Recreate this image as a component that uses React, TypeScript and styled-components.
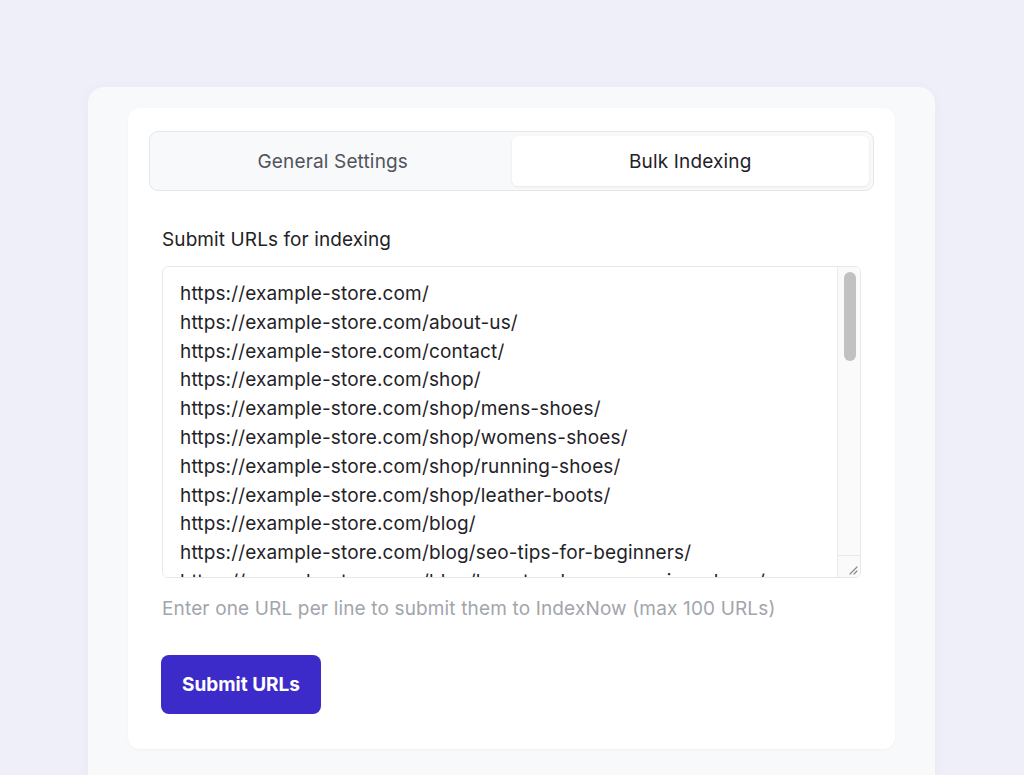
import styled, { createGlobalStyle } from 'styled-components';
import { useState } from 'react';

const GlobalStyle = createGlobalStyle`
  html, body {
    margin: 0;
    padding: 0;
    background: #eeeff8;
    font-family: Inter, "Noto Sans", "Liberation Sans", sans-serif;
    color: #1f2328;
  }
  * { box-sizing: border-box; }
`;

const Page = styled.div`
  min-height: 775px;
  padding: 87px 89px 0 88px;
  overflow: hidden;
`;

const Shell = styled.div`
  background: #f8f9fb;
  border-radius: 16px 16px 0 0;
  padding: 21px 40px 27px 40px;
  min-height: 700px;
  box-shadow: 0 2px 12px rgba(90, 90, 140, 0.05);
`;

const Card = styled.div`
  background: #ffffff;
  border-radius: 12px;
  padding: 23px 21px 35px 21px;
  box-shadow: 0 1px 3px rgba(0, 0, 0, 0.03);
`;

const TabList = styled.div`
  display: grid;
  grid-template-columns: 1fr 1fr;
  height: 60px;
  padding: 4px;
  background: #f8f9fa;
  border: 1px solid #e4e6ea;
  border-radius: 9px;
`;

const Tab = styled.button<{ $active?: boolean }>`
  border: none;
  border-radius: 6px;
  font-family: inherit;
  font-size: 19px;
  letter-spacing: 0.15px;
  cursor: pointer;
  color: ${(p) => (p.$active ? '#1f2328' : '#50545b')};
  background: ${(p) => (p.$active ? '#ffffff' : 'transparent')};
  box-shadow: ${(p) => (p.$active ? '0 1px 3px rgba(0,0,0,0.08)' : 'none')};
`;

const Field = styled.div`
  display: flex;
  flex-direction: column;
  padding: 0 13px;
  margin-top: 37px;
`;

const Label = styled.label`
  font-size: 19px;
  letter-spacing: 0.1px;
  color: #1f2328;
  margin-bottom: 15px;
`;

const BoxWrap = styled.div`
  position: relative;
  height: 312px;
`;

const UrlBox = styled.textarea`
  display: block;
  width: 100%;
  height: 100%;
  padding: 13px 40px 13px 17px;
  font-family: inherit;
  font-size: 19px;
  letter-spacing: 0.15px;
  line-height: 28.8px;
  color: #1f2328;
  border: 1px solid #e6e7ea;
  border-radius: 6px;
  resize: none;
  outline: none;
  white-space: pre;
  overflow-y: scroll;
  overflow-x: hidden;
  scrollbar-width: none;

  &::-webkit-scrollbar {
    display: none;
  }
`;

/* drawn scrollbar + resize grip sitting over the textarea's right edge */
const Track = styled.div`
  position: absolute;
  top: 1px;
  right: 1px;
  bottom: 1px;
  width: 23px;
  background: #fafafa;
  border-left: 1px solid #ececec;
  border-radius: 0 5px 5px 0;
  display: flex;
  flex-direction: column;
  pointer-events: none;
`;

const Thumb = styled.div`
  margin: 5px 0 0 6px;
  width: 12px;
  height: 89px;
  border-radius: 6px;
  background: #c1c1c1;
`;

const Corner = styled.div`
  margin-top: auto;
  height: 22px;
  border-top: 1px solid #e8e8e8;
  display: flex;
  align-items: flex-end;
  justify-content: flex-end;
  padding: 0 2px 2px 0;
`;

const Hint = styled.p`
  margin: 19px 0 0;
  font-size: 19px;
  letter-spacing: 0.15px;
  color: #a2a5ab;
`;

const SubmitButton = styled.button`
  align-self: flex-start;
  margin: 35px 0 0 -1px;
  width: 160px;
  height: 59px;
  border: none;
  border-radius: 8px;
  background: #3d2bc9;
  color: #ffffff;
  font-family: inherit;
  font-size: 19px;
  font-weight: 700;
  cursor: pointer;
`;

const urls = [
  'https://example-store.com/',
  'https://example-store.com/about-us/',
  'https://example-store.com/contact/',
  'https://example-store.com/shop/',
  'https://example-store.com/shop/mens-shoes/',
  'https://example-store.com/shop/womens-shoes/',
  'https://example-store.com/shop/running-shoes/',
  'https://example-store.com/shop/leather-boots/',
  'https://example-store.com/blog/',
  'https://example-store.com/blog/seo-tips-for-beginners/',
  'https://example-store.com/blog/how-to-choose-running-shoes/',
  'https://example-store.com/blog/caring-for-leather-boots/',
  'https://example-store.com/faq/',
  'https://example-store.com/shipping-returns/',
];

export default function App() {
  const [tab, setTab] = useState('bulk');
  const [value, setValue] = useState(urls.join('\n'));

  return (
    <>
      <GlobalStyle />
      <Page>
        <Shell>
          <Card>
            <TabList>
              <Tab $active={tab === 'general'} onClick={() => setTab('general')}>
                General Settings
              </Tab>
              <Tab $active={tab === 'bulk'} onClick={() => setTab('bulk')}>
                Bulk Indexing
              </Tab>
            </TabList>
            <Field>
              <Label htmlFor="urls">Submit URLs for indexing</Label>
              <BoxWrap>
                <UrlBox
                  id="urls"
                  value={value}
                  onChange={(e) => setValue(e.target.value)}
                  spellCheck={false}
                />
                <Track aria-hidden="true">
                  <Thumb />
                  <Corner>
                    <svg width="10" height="10" viewBox="0 0 10 10">
                      <path d="M9 2 L2 9 M9 6 L6 9" stroke="#8a8a8a" strokeWidth="1.2" strokeLinecap="round" />
                    </svg>
                  </Corner>
                </Track>
              </BoxWrap>
              <Hint>Enter one URL per line to submit them to IndexNow (max 100 URLs)</Hint>
              <SubmitButton type="button">Submit URLs</SubmitButton>
            </Field>
          </Card>
        </Shell>
      </Page>
    </>
  );
}
